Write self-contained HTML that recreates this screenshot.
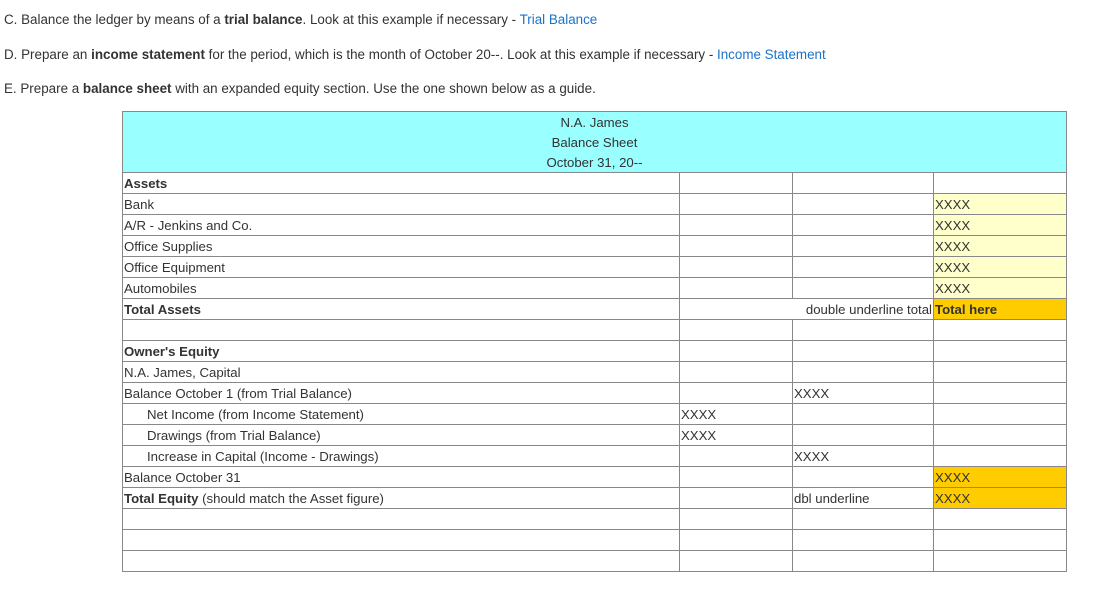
<!DOCTYPE html>
<html><head><style>
body{margin:0;background:#fff;font-family:"Liberation Sans",sans-serif;font-size:13.4px;color:#333;}
p{position:absolute;left:4px;margin:0;white-space:nowrap;}
a{color:#1a73c8;text-decoration:none;}
table{position:absolute;left:122px;top:111px;width:944px;border-collapse:collapse;table-layout:fixed;border:1px solid #222;}
td{border:1px solid #888;height:20px;padding:0 1px;line-height:20px;white-space:nowrap;overflow:hidden;font-size:13.2px;}
td span{position:relative;top:1px;}
td.h{background:#99ffff;text-align:center;height:60px;line-height:20px;padding:0;}
.y{background:#ffffcc;}
.o{background:#ffcc00;}
.i{padding-left:24px;}
.r{text-align:right;}
</style></head><body>
<p style="top:12px">C. Balance the ledger by means of a <b>trial balance</b>. Look at this example if necessary - <a>Trial Balance</a></p>
<p style="top:47px">D. Prepare an <b>income statement</b> for the period, which is the month of October 20--. Look at this example if necessary - <a>Income Statement</a></p>
<p style="top:81px">E. Prepare a <b>balance sheet</b> with an expanded equity section. Use the one shown below as a guide.</p>
<table>
<colgroup><col style="width:557px"><col style="width:113px"><col style="width:141px"><col style="width:133px"></colgroup>
<tr><td class="h" colspan="4"><span>N.A. James<br>Balance Sheet<br>October 31, 20--</span></td></tr>
<tr><td><span><b>Assets</b></span></td><td></td><td></td><td></td></tr>
<tr><td><span>Bank</span></td><td></td><td></td><td class="y"><span>XXXX</span></td></tr>
<tr><td><span>A/R - Jenkins and Co.</span></td><td></td><td></td><td class="y"><span>XXXX</span></td></tr>
<tr><td><span>Office Supplies</span></td><td></td><td></td><td class="y"><span>XXXX</span></td></tr>
<tr><td><span>Office Equipment</span></td><td></td><td></td><td class="y"><span>XXXX</span></td></tr>
<tr><td><span>Automobiles</span></td><td></td><td></td><td class="y"><span>XXXX</span></td></tr>
<tr><td><span><b>Total Assets</b></span></td><td colspan="2" class="r"><span>double underline total</span></td><td class="o"><span><b>Total here</b></span></td></tr>
<tr><td></td><td></td><td></td><td></td></tr>
<tr><td><span><b>Owner's Equity</b></span></td><td></td><td></td><td></td></tr>
<tr><td><span>N.A. James, Capital</span></td><td></td><td></td><td></td></tr>
<tr><td><span>Balance October 1 (from Trial Balance)</span></td><td></td><td><span>XXXX</span></td><td></td></tr>
<tr><td class="i"><span>Net Income (from Income Statement)</span></td><td><span>XXXX</span></td><td></td><td></td></tr>
<tr><td class="i"><span>Drawings (from Trial Balance)</span></td><td><span>XXXX</span></td><td></td><td></td></tr>
<tr><td class="i"><span>Increase in Capital (Income - Drawings)</span></td><td></td><td><span>XXXX</span></td><td></td></tr>
<tr><td><span>Balance October 31</span></td><td></td><td></td><td class="o"><span>XXXX</span></td></tr>
<tr><td><span><b>Total Equity</b> (should match the Asset figure)</span></td><td></td><td><span>dbl underline</span></td><td class="o"><span>XXXX</span></td></tr>
<tr><td></td><td></td><td></td><td></td></tr>
<tr><td></td><td></td><td></td><td></td></tr>
<tr><td></td><td></td><td></td><td></td></tr>
</table>
</body></html>
